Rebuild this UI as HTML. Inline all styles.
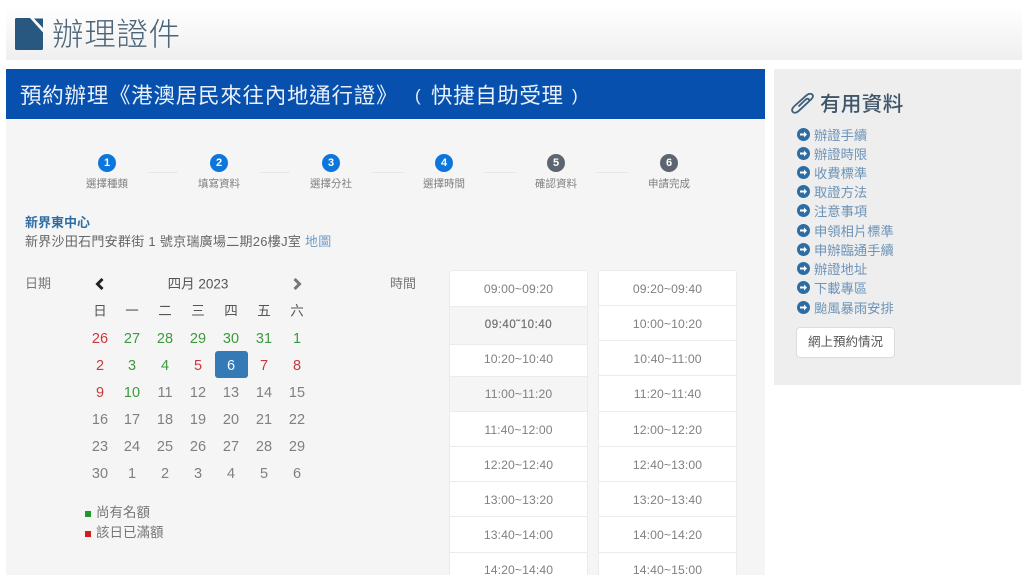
<!DOCTYPE html>
<html lang="zh-Hant">
<head>
<meta charset="utf-8">
<title>辦理證件</title>
<style>
html,body{margin:0;padding:0;width:1024px;height:575px;overflow:hidden;background:#fff}
body{position:relative;font-family:"Liberation Sans","Noto Sans CJK TC",sans-serif;color:#666}
.a{position:absolute;white-space:nowrap}
.c{position:absolute;white-space:nowrap;transform:translate(-50%,-50%);line-height:1}
.slot{position:absolute;box-sizing:border-box;background:#fff;border:1px solid #ebebeb;width:139px;text-align:center;font-size:12.2px;color:#808080;letter-spacing:.1px}
.num{position:absolute;width:18px;height:18px;border-radius:50%;color:#fff;font-size:11px;font-weight:bold;text-align:center;line-height:18px;top:154px}
.step{position:absolute;top:177px;width:80px;text-align:center;font-size:10.5px;line-height:15px;color:#7f7f7f}
.ln{position:absolute;top:172px;width:30px;height:1px;background:#e6e6e6}
.cal{font-size:14.5px;color:#808080}
.h{font-size:13.5px;color:#555}
.g{color:#3c9a3c}.r{color:#c8383c}
.lk{position:absolute;left:797px;height:19px}
.lk svg{position:absolute;left:0;top:2px}
.lk span{position:absolute;left:17px;top:0;font-size:13.3px;line-height:19px;color:#6d94b8;white-space:nowrap}
</style>
</head>
<body>
<div class="a" style="left:6px;top:0;width:1016px;height:60px;background:linear-gradient(#fff 10%,#efefef)"></div>
<svg class="a" style="left:15px;top:18px" width="28" height="32" viewBox="0 0 28 32"><path d="M1.500 0H15L28 14.500V30.500A1.500 1.500 0 0 1 26.500 32H1.500A1.500 1.500 0 0 1 0 30.500V1.500A1.500 1.500 0 0 1 1.500 0Z" fill="#28577f"/><path d="M19 0.500H28V10Z" fill="#28577f"/></svg>
<div class="a" style="left:52px;top:14px;font-size:31.500px;line-height:40px;color:#4b6478;font-weight:300;letter-spacing:.7px">辦理證件</div>

<div class="a" style="left:6px;top:69px;width:759px;height:506px;background:#f5f5f5"></div>
<div class="a" style="left:6px;top:69px;width:759px;height:50px;background:#0750ae"></div>
<div class="a" style="left:20px;top:81px;font-size:21.500px;line-height:30px;color:#eaf1fa;letter-spacing:.75px">預約辦理《港澳居民來往內地通行證》</div>
<div class="a" style="left:415px;top:84px;font-size:17px;line-height:24px;color:#eaf1fa;font-family:'Liberation Sans',sans-serif">(</div>
<div class="a" style="left:431px;top:81px;font-size:21.500px;line-height:30px;color:#eaf1fa;letter-spacing:.6px">快捷自助受理</div>
<div class="a" style="left:572px;top:84px;font-size:17px;line-height:24px;color:#eaf1fa;font-family:'Liberation Sans',sans-serif">)</div>

<div class="num" style="left:98px;background:#0d76dc">1</div>
<div class="num" style="left:210px;background:#0d76dc">2</div>
<div class="num" style="left:322px;background:#0d76dc">3</div>
<div class="num" style="left:435px;background:#0d76dc">4</div>
<div class="num" style="left:547px;background:#5d6670">5</div>
<div class="num" style="left:660px;background:#5d6670">6</div>
<div class="ln" style="left:148px"></div><div class="ln" style="left:260px"></div><div class="ln" style="left:373px"></div><div class="ln" style="left:485px"></div><div class="ln" style="left:597px"></div>
<div class="step" style="left:67px">選擇種類</div>
<div class="step" style="left:179px">填寫資料</div>
<div class="step" style="left:291px">選擇分社</div>
<div class="step" style="left:404px">選擇時間</div>
<div class="step" style="left:516px">確認資料</div>
<div class="step" style="left:629px">申請完成</div>

<div class="a" style="left:25px;top:214px;font-size:13px;line-height:18px;font-weight:bold;color:#2e6da4">新界東中心</div>
<div class="a" style="left:25px;top:233px;font-size:13px;line-height:18px;color:#666;letter-spacing:.28px">新界沙田石門安群街 1 號京瑞廣場二期26樓J室 <span style="color:#6f9cc4">地圖</span></div>

<div class="a" style="left:25px;top:275px;font-size:13px;line-height:18px;color:#777">日期</div>
<div class="a" style="left:390px;top:275px;font-size:13px;line-height:18px;color:#777">時間</div>
<svg class="a" style="left:94px;top:278px" width="11" height="12" viewBox="0 0 11 12"><path d="M8.500 1L3.500 6L8.500 11" fill="none" stroke="#222" stroke-width="3"/></svg>
<svg class="a" style="left:292px;top:278px" width="11" height="12" viewBox="0 0 11 12"><path d="M2.500 1L7.500 6L2.500 11" fill="none" stroke="#777" stroke-width="3"/></svg>
<div class="c" style="left:198px;top:284px;font-size:13.500px;color:#555">四月 2023</div>

<div class="c h" style="left:100px;top:311px">日</div><div class="c h" style="left:132px;top:311px">一</div><div class="c h" style="left:165px;top:311px">二</div><div class="c h" style="left:198px;top:311px">三</div><div class="c h" style="left:231px;top:311px">四</div><div class="c h" style="left:264px;top:311px">五</div><div class="c h" style="left:297px;top:311px">六</div>

<div class="c cal r" style="left:100px;top:339px">26</div><div class="c cal g" style="left:132px;top:339px">27</div><div class="c cal g" style="left:165px;top:339px">28</div><div class="c cal g" style="left:198px;top:339px">29</div><div class="c cal g" style="left:231px;top:339px">30</div><div class="c cal g" style="left:264px;top:339px">31</div><div class="c cal g" style="left:297px;top:339px">1</div>

<div class="c cal r" style="left:100px;top:366px">2</div><div class="c cal g" style="left:132px;top:366px">3</div><div class="c cal g" style="left:165px;top:366px">4</div><div class="c cal r" style="left:198px;top:366px">5</div>
<div class="a" style="left:215px;top:351px;width:33px;height:27px;background:#337ab7;border-radius:3px"></div>
<div class="c cal" style="left:231px;top:366px;color:#fff">6</div>
<div class="c cal r" style="left:264px;top:366px">7</div><div class="c cal r" style="left:297px;top:366px">8</div>

<div class="c cal r" style="left:100px;top:393px">9</div><div class="c cal g" style="left:132px;top:393px">10</div><div class="c cal" style="left:165px;top:393px">11</div><div class="c cal" style="left:198px;top:393px">12</div><div class="c cal" style="left:231px;top:393px">13</div><div class="c cal" style="left:264px;top:393px">14</div><div class="c cal" style="left:297px;top:393px">15</div>

<div class="c cal" style="left:100px;top:420px">16</div><div class="c cal" style="left:132px;top:420px">17</div><div class="c cal" style="left:165px;top:420px">18</div><div class="c cal" style="left:198px;top:420px">19</div><div class="c cal" style="left:231px;top:420px">20</div><div class="c cal" style="left:264px;top:420px">21</div><div class="c cal" style="left:297px;top:420px">22</div>

<div class="c cal" style="left:100px;top:447px">23</div><div class="c cal" style="left:132px;top:447px">24</div><div class="c cal" style="left:165px;top:447px">25</div><div class="c cal" style="left:198px;top:447px">26</div><div class="c cal" style="left:231px;top:447px">27</div><div class="c cal" style="left:264px;top:447px">28</div><div class="c cal" style="left:297px;top:447px">29</div>

<div class="c cal" style="left:100px;top:474px">30</div><div class="c cal" style="left:132px;top:474px">1</div><div class="c cal" style="left:165px;top:474px">2</div><div class="c cal" style="left:198px;top:474px">3</div><div class="c cal" style="left:231px;top:474px">4</div><div class="c cal" style="left:264px;top:474px">5</div><div class="c cal" style="left:297px;top:474px">6</div>

<div class="a" style="left:85px;top:511px;width:6px;height:6px;background:#1f9a2e"></div>
<div class="a" style="left:85px;top:531px;width:6px;height:6px;background:#d71a1a"></div>
<div class="a" style="left:96px;top:503px;font-size:13.500px;line-height:19px;color:#777">尚有名額</div>
<div class="a" style="left:96px;top:523px;font-size:13.500px;line-height:19px;color:#777">該日已滿額</div>

<div class="slot" style="left:449px;top:270px;height:37px;line-height:36px;border-radius:3px 3px 0 0">09:00~09:20</div>
<div class="slot" style="left:449px;top:306px;height:39px;line-height:36px;background:#f5f5f5;font-size:11.500px;color:#707070;letter-spacing:.55px;-webkit-text-stroke:.2px #707070">09:40˜10:40</div>
<div class="slot" style="left:449px;top:344px;height:33px;line-height:29px">10:20~10:40</div>
<div class="slot" style="left:449px;top:376px;height:36px;line-height:34px;background:#f5f5f5">11:00~11:20</div>
<div class="slot" style="left:449px;top:411px;height:36px;line-height:36px">11:40~12:00</div>
<div class="slot" style="left:449px;top:446px;height:36px;line-height:36px">12:20~12:40</div>
<div class="slot" style="left:449px;top:481px;height:36px;line-height:36px">13:00~13:20</div>
<div class="slot" style="left:449px;top:516px;height:37px;line-height:37px">13:40~14:00</div>
<div class="slot" style="left:449px;top:552px;height:40px;line-height:34px">14:20~14:40</div>

<div class="slot" style="left:598px;top:270px;height:36px;line-height:36px;border-radius:3px 3px 0 0">09:20~09:40</div>
<div class="slot" style="left:598px;top:305px;height:36px;line-height:37px">10:00~10:20</div>
<div class="slot" style="left:598px;top:340px;height:36px;line-height:37px">10:40~11:00</div>
<div class="slot" style="left:598px;top:375px;height:37px;line-height:37px">11:20~11:40</div>
<div class="slot" style="left:598px;top:411px;height:36px;line-height:36px">12:00~12:20</div>
<div class="slot" style="left:598px;top:446px;height:36px;line-height:36px">12:40~13:00</div>
<div class="slot" style="left:598px;top:481px;height:36px;line-height:36px">13:20~13:40</div>
<div class="slot" style="left:598px;top:516px;height:37px;line-height:37px">14:00~14:20</div>
<div class="slot" style="left:598px;top:552px;height:40px;line-height:34px">14:40~15:00</div>

<div class="a" style="left:774px;top:69px;width:247px;height:316px;background:#eeeeee"></div>
<svg class="a" style="left:791px;top:92.500px" width="24" height="21" viewBox="0 0 24 21"><path d="M11.500 14.500L20 6.500C22.300 4.300 22.500 2.500 21 1.300C19.500 .2 17.300 .7 15.200 2.600L3.500 13C.8 15.500 .4 17.600 1.900 19C3.400 20.300 5.600 19.800 8 17.700L17 9.300C18.300 8.100 18.500 6.900 17.600 6.100C16.700 5.400 15.500 5.800 14.300 6.900L7.500 13.500" fill="none" stroke="#3c5f7c" stroke-width="1.800"/></svg>
<div class="a" style="left:820px;top:91px;font-size:20.500px;line-height:28px;color:#3f566a;font-weight:500;letter-spacing:.4px">有用資料</div>

<div class="lk" style="top:126px"><svg width="13" height="13" viewBox="0 0 13 13"><circle cx="6.500" cy="6.500" r="6.500" fill="#2e6da4"/><path d="M3 5.500H7V3.500L10 6.500L7 9.500V7.500H3Z" fill="#fff"/></svg><span>辦證手續</span></div>
<div class="lk" style="top:145px"><svg width="13" height="13" viewBox="0 0 13 13"><circle cx="6.500" cy="6.500" r="6.500" fill="#2e6da4"/><path d="M3 5.500H7V3.500L10 6.500L7 9.500V7.500H3Z" fill="#fff"/></svg><span>辦證時限</span></div>
<div class="lk" style="top:164px"><svg width="13" height="13" viewBox="0 0 13 13"><circle cx="6.500" cy="6.500" r="6.500" fill="#2e6da4"/><path d="M3 5.500H7V3.500L10 6.500L7 9.500V7.500H3Z" fill="#fff"/></svg><span>收費標準</span></div>
<div class="lk" style="top:183px"><svg width="13" height="13" viewBox="0 0 13 13"><circle cx="6.500" cy="6.500" r="6.500" fill="#2e6da4"/><path d="M3 5.500H7V3.500L10 6.500L7 9.500V7.500H3Z" fill="#fff"/></svg><span>取證方法</span></div>
<div class="lk" style="top:202px"><svg width="13" height="13" viewBox="0 0 13 13"><circle cx="6.500" cy="6.500" r="6.500" fill="#2e6da4"/><path d="M3 5.500H7V3.500L10 6.500L7 9.500V7.500H3Z" fill="#fff"/></svg><span>注意事項</span></div>
<div class="lk" style="top:222px"><svg width="13" height="13" viewBox="0 0 13 13"><circle cx="6.500" cy="6.500" r="6.500" fill="#2e6da4"/><path d="M3 5.500H7V3.500L10 6.500L7 9.500V7.500H3Z" fill="#fff"/></svg><span>申領相片標準</span></div>
<div class="lk" style="top:241px"><svg width="13" height="13" viewBox="0 0 13 13"><circle cx="6.500" cy="6.500" r="6.500" fill="#2e6da4"/><path d="M3 5.500H7V3.500L10 6.500L7 9.500V7.500H3Z" fill="#fff"/></svg><span>申辦臨通手續</span></div>
<div class="lk" style="top:260px"><svg width="13" height="13" viewBox="0 0 13 13"><circle cx="6.500" cy="6.500" r="6.500" fill="#2e6da4"/><path d="M3 5.500H7V3.500L10 6.500L7 9.500V7.500H3Z" fill="#fff"/></svg><span>辦證地址</span></div>
<div class="lk" style="top:279px"><svg width="13" height="13" viewBox="0 0 13 13"><circle cx="6.500" cy="6.500" r="6.500" fill="#2e6da4"/><path d="M3 5.500H7V3.500L10 6.500L7 9.500V7.500H3Z" fill="#fff"/></svg><span>下載專區</span></div>
<div class="lk" style="top:299px"><svg width="13" height="13" viewBox="0 0 13 13"><circle cx="6.500" cy="6.500" r="6.500" fill="#2e6da4"/><path d="M3 5.500H7V3.500L10 6.500L7 9.500V7.500H3Z" fill="#fff"/></svg><span>颱風暴雨安排</span></div>

<div class="a" style="left:796px;top:327px;width:99px;height:31px;box-sizing:border-box;background:#fff;border:1px solid #dcdcdc;border-radius:4px;text-align:center;font-size:12.500px;line-height:29px;color:#555">網上預約情況</div>
</body>
</html>
